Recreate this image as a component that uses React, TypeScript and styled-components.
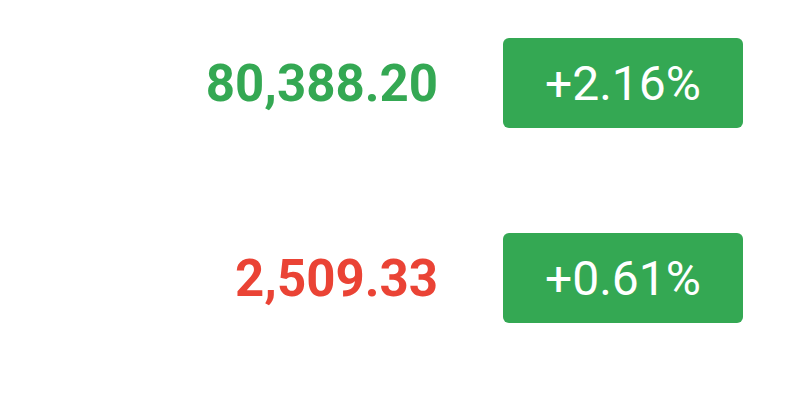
import React from "react";
import styled, { createGlobalStyle } from "styled-components";

const GlobalStyle = createGlobalStyle`
  html, body {
    margin: 0;
    padding: 0;
    background: #ffffff;
  }
  body {
    font-family: Roboto, "Liberation Sans", sans-serif;
  }
`;

const palette = {
  green: "#34a853",
  red: "#ea4335",
  white: "#ffffff",
};

const List = styled.div`
  display: flex;
  flex-direction: column;
  gap: 105px;
  padding: 38px 45px 0 0;
`;

const Row = styled.div`
  display: flex;
  align-items: center;
  justify-content: flex-end;
  gap: 65px;
`;

const Price = styled.span<{ $up: boolean }>`
  font-size: 51px;
  font-weight: 700;
  color: ${(p) => (p.$up ? palette.green : palette.red)};
  text-align: right;
`;

const ChangeBadge = styled.div<{ $up: boolean }>`
  width: 240px;
  height: 90px;
  display: flex;
  align-items: center;
  justify-content: center;
  border-radius: 6px;
  background-color: ${(p) => (p.$up ? palette.green : palette.red)};
  color: ${palette.white};
  font-size: 48px;
  font-weight: 400;
`;

interface Quote {
  price: string;
  priceUp: boolean;
  change: string;
  changeUp: boolean;
}

const quotes: Quote[] = [
  { price: "80,388.20", priceUp: true, change: "+2.16%", changeUp: true },
  { price: "2,509.33", priceUp: false, change: "+0.61%", changeUp: true },
];

const App: React.FC = () => {
  return (
    <>
      <GlobalStyle />
      <List>
        {quotes.map((q) => (
          <Row key={q.price}>
            <Price $up={q.priceUp}>{q.price}</Price>
            <ChangeBadge $up={q.changeUp}>{q.change}</ChangeBadge>
          </Row>
        ))}
      </List>
    </>
  );
};

export default App;
